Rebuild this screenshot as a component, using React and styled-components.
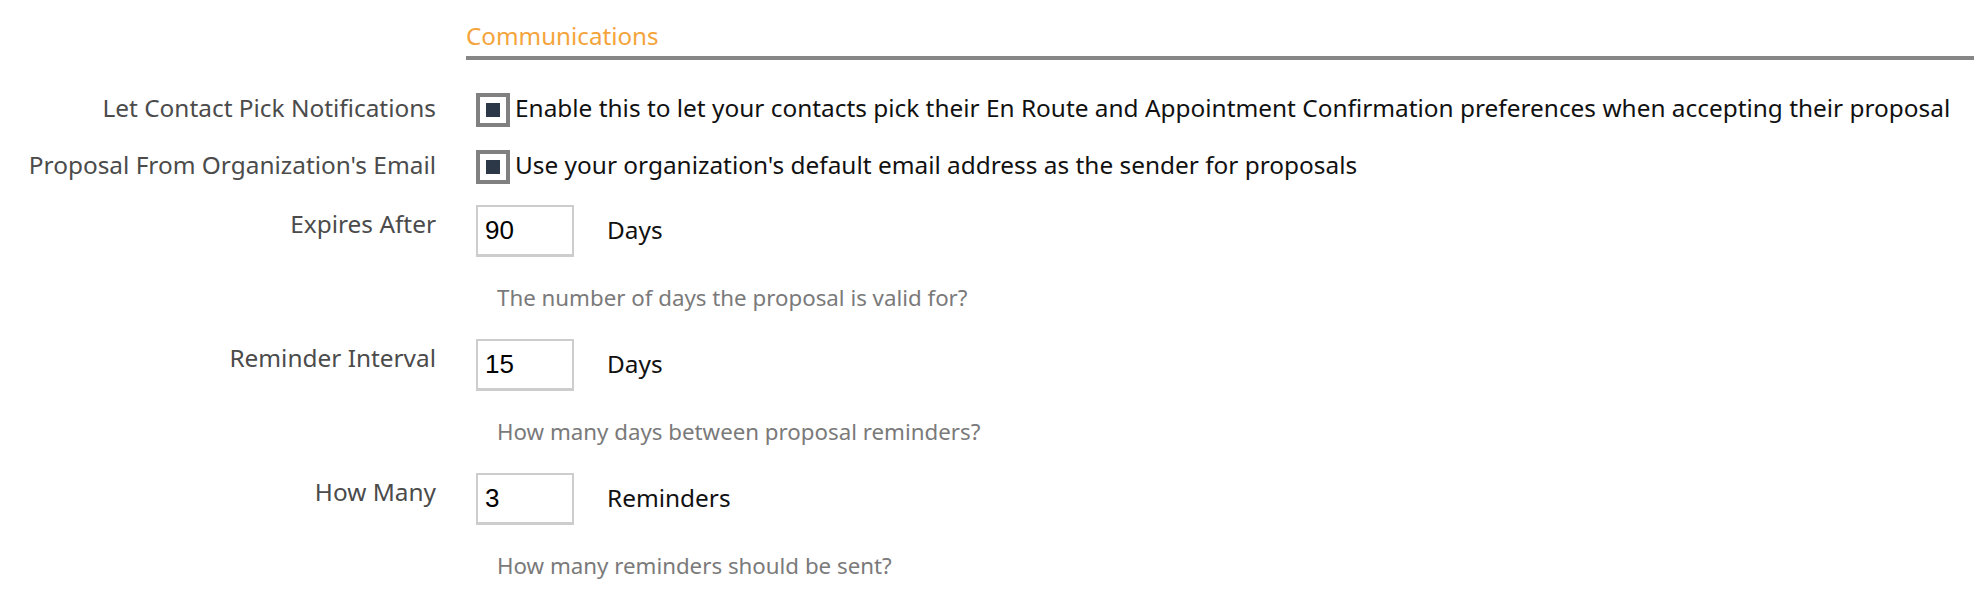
import React from 'react'
import styled, { createGlobalStyle } from 'styled-components'

const GlobalStyle = createGlobalStyle`
  body {
    margin: 0;
    background: #fff;
    font-family: "Noto Sans", sans-serif;
  }
`

const Section = styled.section`
  padding-top: 21px;
`

const SectionTitle = styled.h2`
  margin: 0 0 33px 466px;
  padding-bottom: 5px;
  border-bottom: 4px solid #878787;
  font-size: 24.2px;
  font-weight: 400;
  line-height: 30px;
  color: #f4a43a;
`

const Field = styled.div`
  display: grid;
  grid-template-columns: 436px 1fr;
  column-gap: 40px;
  margin-bottom: ${p => p.$gap}px;
`

const Label = styled.div`
  padding-top: ${p => p.$offset || 0}px;
  text-align: right;
  font-size: 24.4px;
  line-height: 29px;
  color: #4b4b4b;
  white-space: nowrap;
`

const Control = styled.div`
  display: flex;
  align-items: flex-start;
`

const Box = styled.span`
  box-sizing: border-box;
  flex: none;
  display: flex;
  align-items: center;
  justify-content: center;
  width: 34px;
  height: 34px;
  border: 4px solid #808080;
  background: #fff;
  &::after {
    content: '';
    width: 14px;
    height: 14px;
    background: #2c3748;
  }
`

const CheckText = styled.span`
  margin-left: 5px;
  font-size: 24.4px;
  line-height: 29px;
  color: #111;
  white-space: nowrap;
`

const NumberInput = styled.input`
  box-sizing: border-box;
  flex: none;
  width: 98px;
  height: 52px;
  margin: 0;
  padding: 0 0 0 7px;
  border: 2px solid #cdcdcd;
  border-bottom-width: 3px;
  background: #fff;
  font-family: "Liberation Sans", Arial, sans-serif;
  font-size: 26px;
  color: #000;
  outline: none;
`

const Unit = styled.span`
  margin-left: 33px;
  font-size: 24.4px;
  line-height: 50px;
  color: #111;
`

const Help = styled.div`
  grid-column: 2;
  margin: 26px 0 0 21px;
  font-size: 22.3px;
  line-height: 30px;
  color: #7a7a7a;
`

const checks = [
  {
    label: 'Let Contact Pick Notifications',
    text: 'Enable this to let your contacts pick their En Route and Appointment Confirmation preferences when accepting their proposal',
    gap: 23,
  },
  {
    label: "Proposal From Organization's Email",
    text: "Use your organization's default email address as the sender for proposals",
    gap: 21,
  },
]

const numbers = [
  { label: 'Expires After', value: '90', unit: 'Days', help: 'The number of days the proposal is valid for?' },
  { label: 'Reminder Interval', value: '15', unit: 'Days', help: 'How many days between proposal reminders?' },
  { label: 'How Many', value: '3', unit: 'Reminders', help: 'How many reminders should be sent?' },
]

export default function App() {
  return (
    <>
      <GlobalStyle />
      <Section>
        <SectionTitle>Communications</SectionTitle>
        {checks.map(c => (
          <Field key={c.label} $gap={c.gap}>
            <Label>{c.label}</Label>
            <Control>
              <Box role="checkbox" aria-checked="true" />
              <CheckText>{c.text}</CheckText>
            </Control>
          </Field>
        ))}
        {numbers.map(n => (
          <Field key={n.label} $gap={26}>
            <Label $offset={4}>{n.label}</Label>
            <Control>
              <NumberInput type="text" defaultValue={n.value} />
              <Unit>{n.unit}</Unit>
            </Control>
            <Help>{n.help}</Help>
          </Field>
        ))}
      </Section>
    </>
  )
}
